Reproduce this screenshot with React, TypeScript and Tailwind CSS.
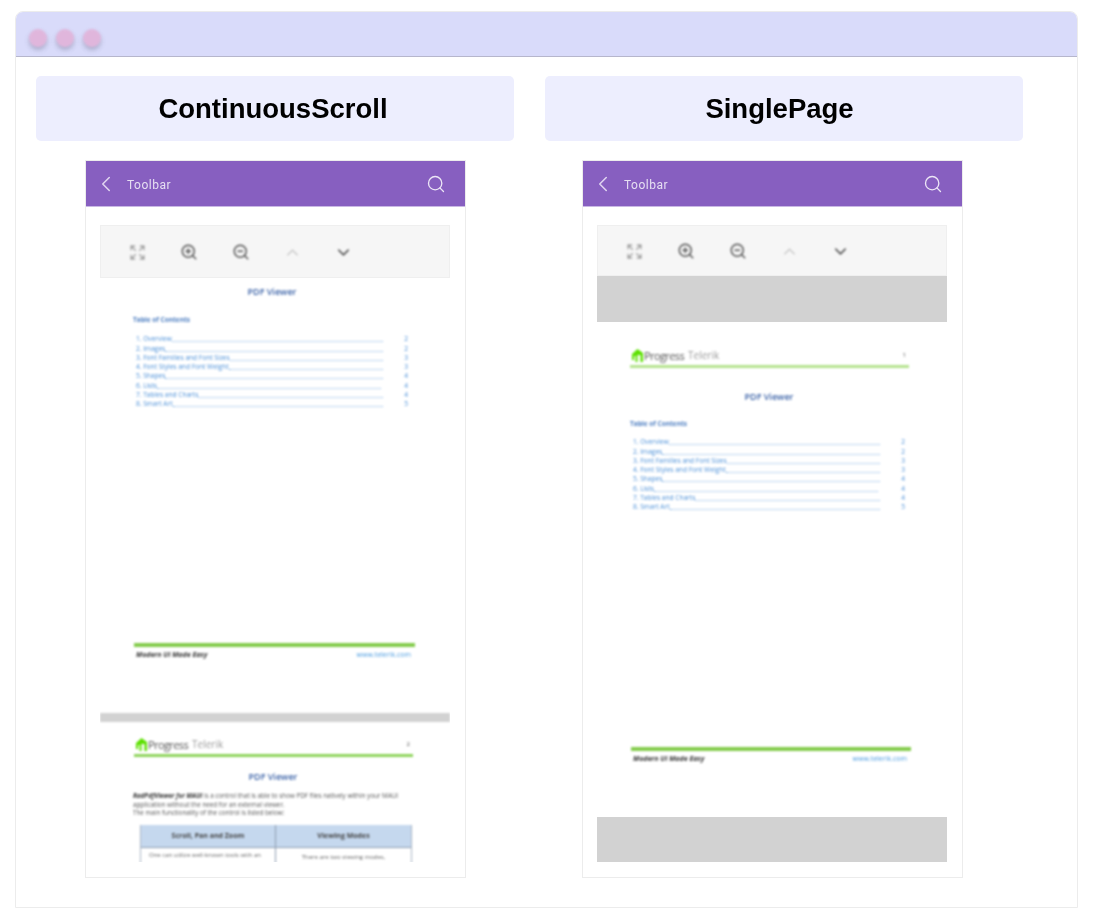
import { ChevronDown, ChevronLeft, ChevronUp, Expand, Search, ZoomIn, ZoomOut } from 'lucide-react';

const tocRows = [
  { label: '1. Overview', page: 2, end: 0 },
  { label: '2. Images', page: 2, end: 0 },
  { label: '3. Font Families and Font Sizes', page: 3, end: 0 },
  { label: '4. Font Styles and Font Weight', page: 3, end: 0 },
  { label: '5. Shapes', page: 4, end: 0 },
  { label: '6. Lists', page: 4, end: 1 },
  { label: '7. Tables and Charts', page: 4, end: 0 },
  { label: '8. Smart Art', page: 5, end: 0 },
];

function ToolbarPanel({ height }: { height: string }) {
  return (
    <div className={`${height} shrink-0 flex items-center pl-[11px] pt-[1px] bg-[#f6f6f6] border border-[#efefef]`}>
      <div className="w-[51px] flex justify-center blur-[0.9px]"><Expand size={17} strokeWidth={1.6} className="text-[#8f8f8f]" /></div>
      <div className="w-[52px] flex justify-center blur-[0.9px]"><ZoomIn size={18} strokeWidth={1.9} className="text-[#555555]" /></div>
      <div className="w-[51px] flex justify-center blur-[0.9px]"><ZoomOut size={18} strokeWidth={1.9} className="text-[#555555]" /></div>
      <div className="w-[52px] flex justify-center blur-[0.9px]"><ChevronUp size={19} strokeWidth={1.4} className="text-[#bdbdbd]" /></div>
      <div className="w-[51px] flex justify-center blur-[0.9px]"><ChevronDown size={19} strokeWidth={1.9} className="text-[#555555]" /></div>
    </div>
  );
}

function Logo() {
  return (
    <div className="flex items-center gap-[1px]">
      <svg width="11" height="13" viewBox="0 0 11 13">
        <path d="M0 5 L5.5 0 L11 4 V13 H8.5 V6 H5.5 V13 H3.5 V7 H2 V11 H0 Z" fill="#5ce000" />
      </svg>
      <span className="text-[11px] leading-[13px] tracking-[-0.6px] font-['Open_Sans',sans-serif] text-[#555555]">Progress</span>
      <span className="ml-[3px] text-[10px] leading-[13px] font-['Open_Sans',sans-serif] text-[#999999]">Telerik</span>
    </div>
  );
}

function PageHeader({ num, line }: { num: number; line: string }) {
  return (
    <div className="flex flex-col">
      <div className="flex items-center justify-between pl-[2px] pr-[3px] h-[15px]">
        <Logo />
        <span className="text-[6px] text-[#555555]">{num}</span>
      </div>
      <div className={`h-[3px] mt-[2px] ${line}`} />
    </div>
  );
}

function PageFooter() {
  return (
    <div className="flex flex-col">
      <div className="h-[4px] bg-[#84cc4c]" />
      <div className="flex justify-between pl-[2px] pr-[4px] mt-[3px] text-[7px] leading-[10px]">
        <span className="font-bold italic text-[#333333]">Modern UI Made Easy</span>
        <span className="text-[#4a9be0]">www.telerik.com</span>
      </div>
    </div>
  );
}

function PageTitle({ offset }: { offset: string }) {
  return <div className={`text-center text-[9px] leading-[12px] font-semibold text-[#3d64a8] ${offset}`}>PDF Viewer</div>;
}

function TocBlock({ gap }: { gap: string }) {
  return (
    <div className="flex flex-col">
      <div className="text-[6.5px] leading-[8px] font-bold text-[#4a7cc0]">Table of Contents</div>
      <div className={`flex flex-col ${gap} pl-[3px]`}>
        {tocRows.map((row) => (
          <div key={row.label} className="flex items-end h-[9.3px] text-[6.6px] leading-[9px] text-[#4a8fd8]">
            <span className="whitespace-nowrap">{row.label}</span>
            <span className={`flex-1 border-b border-dotted border-[#7fb0e4] mb-[1px] ${row.end ? 'mr-[2px]' : ''}`} />
            <span className="w-[26px] text-right pr-[1px]">{row.page}</span>
          </div>
        ))}
      </div>
    </div>
  );
}

function Phone({ className, children }: { className: string; children: React.ReactNode }) {
  return (
    <div className={`h-[718px] w-[381px] mt-[19px] border border-[#ececec] flex flex-col bg-white ${className}`}>
      <div className="h-[46px] shrink-0 bg-[#875fc0] flex items-center pl-[7px] pr-[19px] text-white border-b border-[#c9b8e4]">
        <ChevronLeft size={26} strokeWidth={1.4} className="text-[#e0d5f0] blur-[0.5px]" />
        <span className="ml-[8px] pt-[2px] flex-1 text-[12px] tracking-[0.5px] font-['Roboto',sans-serif] text-[#e6dff2] blur-[0.7px]">Toolbar</span>
        <Search size={20} strokeWidth={1.6} className="text-[#ece6f6] blur-[0.5px]" />
      </div>
      <div className="ml-[14px] mr-[15px] mt-[18px] h-[637px] overflow-hidden flex flex-col font-['Open_Sans',sans-serif]">
        {children}
      </div>
    </div>
  );
}

function ColumnTitle({ title, inset }: { title: string; inset: string }) {
  return (
    <div className={`h-[65px] rounded-[5px] bg-[#edeefe] flex items-center justify-center text-[27.5px] font-bold text-black font-['Liberation_Sans',sans-serif] ${inset}`}>
      <span className="blur-[0.3px]">{title}</span>
    </div>
  );
}

function ContinuousPages() {
  return (
    <div className="flex flex-col blur-[0.9px]">
      <PageTitle offset="mt-[8px] pr-[6px]" />
      <div className="mt-[18px] pl-[33px] pr-[41px]"><TocBlock gap="mt-[10px]" /></div>
      <div className="mt-[235px] ml-[34px] mr-[35px]"><PageFooter /></div>
      <div className="mt-[53px] h-[9px] bg-[#d2d2d2]" />
      <div className="mt-[15px] ml-[34px] mr-[37px]"><PageHeader num={2} line="bg-[#8fd45c]" /></div>
      <PageTitle offset="mt-[14px] pr-[4px]" />
      <p className="mt-[9px] ml-[33px] mr-[30px] text-[6.3px] leading-[8.5px] text-[#555555] whitespace-nowrap">
        <b className="italic text-[#333333]">RadPdfViewer for MAUI</b> is a control that is able to show PDF files natively within your MAUI
        <br />
        application without the need for an external viewer.
        <br />
        The main functionality of the control is listed below:
      </p>
      <div className="mt-[7px] ml-[40px] mr-[38px] grid grid-cols-2 border-x border-[#aab6c6]">
        <div className="h-[23px] bg-[#c5d8ee] border-r border-b border-[#8c9cb0] flex items-center justify-center text-[7px] font-bold text-[#444444]">Scroll, Pan and Zoom</div>
        <div className="h-[23px] bg-[#c5d8ee] border-b border-[#8c9cb0] flex items-center justify-center text-[7px] font-bold text-[#444444]">Viewing Modes</div>
        <div className="h-[20px] border-r border-[#8c9cb0] pt-[3px] pl-[8px] text-[6px] leading-[9px] text-[#666666]">One can utilize well-known tools with an</div>
        <div className="h-[20px] pt-[5px] text-center text-[6px] leading-[9px] text-[#666666]">There are two viewing modes,</div>
      </div>
    </div>
  );
}

function SinglePage() {
  return (
    <div className="flex flex-col h-[586px]">
      <div className="h-[46px] shrink-0 bg-[#d2d2d2]" />
      <div className="flex flex-col blur-[0.9px]">
        <div className="mt-[26px] ml-[33px] mr-[38px]"><PageHeader num={1} line="bg-[#b5e38f]" /></div>
        <PageTitle offset="mt-[23px] pr-[6px]" />
        <div className="mt-[17px] pl-[33px] pr-[41px]"><TocBlock gap="mt-[9px]" /></div>
        <div className="mt-[236px] ml-[34px] mr-[36px]"><PageFooter /></div>
      </div>
    </div>
  );
}

function Dot() {
  return <div className="w-[18px] h-[18px] rounded-full bg-[#e0b6dc] blur-[1px] shadow-[0_3px_4px_rgba(90,90,120,0.35)]" />;
}

export default function App() {
  return (
    <div className="w-[1094px] h-[918px] bg-white pt-[11px] pl-[15px] overflow-hidden">
      <div className="w-[1063px] h-[897px] border border-[#ececec] rounded-t-[8px] overflow-hidden bg-white">
        <div className="h-[45px] bg-[#d9dbfa] border-b border-[#b6b6cc] flex items-center gap-[9px] pl-[13px] pt-[7px]">
          <Dot />
          <Dot />
          <Dot />
        </div>
        <div className="flex gap-[31px] pl-[20px] pt-[19px]">
          <div className="w-[478px] flex flex-col">
            <ColumnTitle title="ContinuousScroll" inset="pr-[4px]" />
            <Phone className="ml-[49px]">
              <ToolbarPanel height="h-[53px]" />
              <ContinuousPages />
            </Phone>
          </div>
          <div className="w-[478px] flex flex-col">
            <ColumnTitle title="SinglePage" inset="pr-[9px]" />
            <Phone className="ml-[37px]">
              <ToolbarPanel height="h-[51px]" />
              <SinglePage />
              <div className="h-[45px] shrink-0 bg-[#d2d2d2]" />
            </Phone>
          </div>
        </div>
      </div>
    </div>
  );
}
